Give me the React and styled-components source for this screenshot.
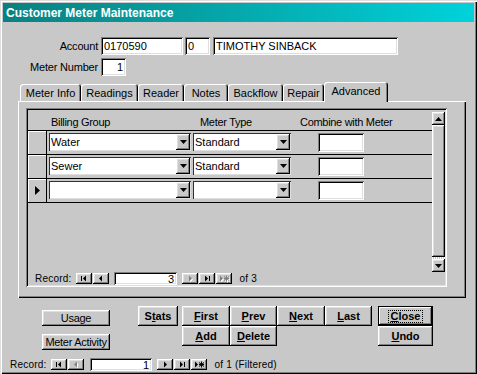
import React from 'react';
import styled, { createGlobalStyle, css } from 'styled-components';

const FACE = '#c8c8c8';
const FONT = `"Liberation Sans", Arial, sans-serif`;

const raised = css`
  box-shadow: inset -1px -1px #000, inset 1px 1px #fff, inset -2px -2px #808080, inset 2px 2px #dfdfdf;
`;

const sunken = css`
  box-shadow: inset 1px 1px #808080, inset -1px -1px #fff, inset 2px 2px #000, inset -2px -2px #dfdfdf;
`;

const GlobalStyle = createGlobalStyle`
  body {
    margin: 0;
    background: ${FACE};
    font-family: ${FONT};
    font-size: 11px;
    color: #000;
  }
`;

const Window = styled.div`
  width: 477px;
  height: 374px;
  box-sizing: border-box;
  padding: 3px;
  background: ${FACE};
  box-shadow: inset 1px 1px #dfdfdf, inset 2px 2px #fff, inset -1px -1px #000, inset -2px -2px #808080;
  display: flex;
  flex-direction: column;
`;

const TitleBar = styled.div`
  height: 19px;
  flex: none;
  background: linear-gradient(to right, #0a8080, #00d2da);
  color: #fff;
  font: 700 12px ${FONT};
  padding-left: 3px;
  display: flex;
  align-items: center;
`;

const Body = styled.div`
  flex: 1;
  display: flex;
  flex-direction: column;
`;

const FieldRow = styled.div`
  display: flex;
  align-items: center;
  margin-top: ${(p) => p.$mt}px;
`;

const Label = styled.div`
  width: 95px;
  margin-right: 3px;
  text-align: right;
  letter-spacing: -0.2px;
`;

const TextBox = styled.div`
  box-sizing: border-box;
  width: ${(p) => p.$w}px;
  height: 18px;
  margin-left: ${(p) => p.$ml || 0}px;
  padding: 0 3px;
  background: #fff;
  ${sunken};
  display: flex;
  align-items: center;
  justify-content: ${(p) => (p.$right ? 'flex-end' : 'flex-start')};
`;

const TabStrip = styled.div`
  display: flex;
  align-items: flex-end;
  height: 19px;
  margin: 6px 0 0 17px;
`;

const Tab = styled.div`
  box-sizing: border-box;
  width: ${(p) => p.$w}px;
  height: ${(p) => (p.$active ? 20 : 17)}px;
  margin-bottom: ${(p) => (p.$active ? -1 : 0)}px;
  position: relative;
  z-index: ${(p) => (p.$active ? 1 : 0)};
  background: ${FACE};
  border-radius: 3px 3px 0 0;
  box-shadow: inset 1px 1px #fff, inset -1px 0 #000, inset -2px 0 #808080;
  display: flex;
  align-items: center;
  justify-content: center;
  padding-bottom: ${(p) => (p.$active ? 3 : 0)}px;
`;

const Panel = styled.div`
  box-sizing: border-box;
  width: 448px;
  height: 197px;
  margin-left: 15px;
  padding: 7px 0 0 8px;
  box-shadow: inset 1px 1px #fff, inset -1px -1px #000, inset -2px -2px #808080;
`;

const Subform = styled.div`
  box-sizing: border-box;
  width: 421px;
  height: 179px;
  padding: 2px;
  ${sunken};
  display: flex;
  flex-direction: column;
`;

const SubMain = styled.div`
  height: 162px;
  display: flex;
`;

const Sheet = styled.div`
  flex: 1;
  display: flex;
  flex-direction: column;
`;

const SheetHead = styled.div`
  box-sizing: border-box;
  height: 21px;
  padding-top: 4px;
  border-bottom: 1px solid #000;
  display: flex;
  align-items: center;
  letter-spacing: -0.3px;
`;

const HeadCell = styled.div`
  box-sizing: border-box;
  width: ${(p) => p.$w}px;
  padding-left: ${(p) => p.$pl || 0}px;
  white-space: nowrap;
`;

const SheetRow = styled.div`
  box-sizing: border-box;
  height: 24px;
  border-bottom: 1px solid #000;
  display: flex;
  align-items: flex-start;
`;

const Selector = styled.div`
  box-sizing: border-box;
  width: 19px;
  align-self: stretch;
  border-right: 1px solid #000;
  box-shadow: inset 1px 1px #fff;
  display: flex;
  align-items: center;
  justify-content: center;
`;

const Combo = styled.div`
  box-sizing: border-box;
  width: ${(p) => p.$w}px;
  height: 18px;
  margin: 2px 0 0 ${(p) => p.$ml}px;
  background: #fff;
  box-shadow: inset 1px 1px #303030, inset -1px -1px #dfdfdf;
  display: flex;
  align-items: center;
  padding-left: 2px;
`;

const ComboText = styled.span`
  flex: 1;
`;

const DropBtn = styled.div`
  box-sizing: border-box;
  width: 14px;
  height: 16px;
  margin-right: 1px;
  background: ${FACE};
  ${raised};
  display: flex;
  align-items: center;
  justify-content: center;
`;

const SmallBox = styled.div`
  box-sizing: border-box;
  width: 46px;
  height: 19px;
  margin: 2px 0 0 27px;
  background: #fff;
  ${sunken};
`;

const VScroll = styled.div`
  width: 13px;
  margin-top: 2px;
  display: flex;
  flex-direction: column;
`;

const ScrollBtn = styled.div`
  box-sizing: border-box;
  height: 13px;
  background: ${FACE};
  ${raised};
  display: flex;
  align-items: center;
  justify-content: center;
`;

const Thumb = styled.div`
  flex: 1;
  background: ${FACE};
  ${raised};
`;

const Track = styled.div`
  height: 2px;
  background: repeating-linear-gradient(90deg, #fff 0 1px, ${FACE} 1px 2px);
`;

const NavBar = styled.div`
  height: 13px;
  flex: none;
  display: flex;
  align-items: center;
  padding-left: ${(p) => p.$pl}px;
  font-size: 10px;
  letter-spacing: 0.2px;
  margin-top: ${(p) => p.$mt || 0}px;
`;

const NavText = styled.span`
  margin-right: ${(p) => p.$mr || 0}px;
  margin-left: ${(p) => p.$ml || 0}px;
  white-space: nowrap;
`;

const NavBtn = styled.div`
  box-sizing: border-box;
  width: 16px;
  height: 11px;
  margin-left: ${(p) => p.$ml ?? 1}px;
  background: ${FACE};
  ${raised};
  display: flex;
`;

const NavBox = styled.div`
  box-sizing: border-box;
  width: ${(p) => p.$w}px;
  height: 13px;
  margin-left: ${(p) => p.$ml}px;
  padding-right: 3px;
  background: #fff;
  ${sunken};
  display: flex;
  align-items: center;
  justify-content: flex-end;
  font-size: 11px;
`;

const Bottom = styled.div`
  display: flex;
  height: 44px;
  margin-top: 8px;
  align-items: flex-start;
`;

const SideCol = styled.div`
  display: flex;
  flex-direction: column;
  gap: 8px;
  margin: 4px 0 0 39px;
`;

const BtnGrid = styled.div`
  display: grid;
  grid-template-columns: ${(p) => p.$cols};
  grid-auto-rows: 20px;
  margin-left: ${(p) => p.$ml}px;
`;

const Btn = styled.button`
  box-sizing: border-box;
  width: ${(p) => (p.$w ? `${p.$w}px` : 'auto')};
  height: ${(p) => p.$h || 20}px;
  margin: 0 0 0 ${(p) => p.$ml || 0}px;
  padding: 0;
  border: none;
  background: ${FACE};
  ${raised};
  font: ${(p) => (p.$regular ? 400 : 700)} 11px ${FONT};
  letter-spacing: ${(p) => (p.$regular ? '-0.3px' : '0')};
  color: #000;
  display: flex;
  align-items: center;
  justify-content: center;
  ${(p) =>
    p.$default &&
    css`
      box-shadow: inset 0 0 0 1px #000, inset -2px -2px #000, inset 2px 2px #fff, inset -3px -3px #808080;
    `}
`;

const FocusText = styled.span`
  outline: 1px dotted #000;
  padding: 0 2px;
  line-height: 11px;
`;

function NavIcon({ kind, disabled }) {
  const shapes = {
    first: (
      <>
        <rect x="5" y="3" width="1" height="5" />
        <polygon points="7,5.5 10,2.5 10,8.5" />
      </>
    ),
    prev: <polygon points="6,5.5 9,2.5 9,8.5" />,
    next: <polygon points="7,2.5 7,8.5 10,5.5" />,
    last: (
      <>
        <polygon points="6,2.5 6,8.5 9,5.5" />
        <rect x="10" y="3" width="1" height="5" />
      </>
    ),
    add: (
      <>
        <polygon points="4,2.5 4,8.5 7,5.5" />
        <path d="M10.5 2.5v6M8 3.5l5 4M8 7.5l5-4M8 5.5h5" stroke="currentColor" strokeWidth="1" fill="none" />
      </>
    ),
  };
  return (
    <svg width="16" height="11" viewBox="0 0 16 11">
      {disabled && (
        <g fill="#fff" color="#fff" transform="translate(1 1)">
          {shapes[kind]}
        </g>
      )}
      <g fill={disabled ? '#808080' : '#000'} color={disabled ? '#808080' : '#000'}>
        {shapes[kind]}
      </g>
    </svg>
  );
}

function Arrow({ up }) {
  return (
    <svg width="7" height="4" viewBox="0 0 7 4">
      <polygon points={up ? '3.5,0 7,4 0,4' : '0,0 7,0 3.5,4'} fill="#000" />
    </svg>
  );
}

function RowPointer() {
  return (
    <svg width="5" height="9" viewBox="0 0 5 9">
      <polygon points="0,0 0,9 5,4.5" fill="#000" />
    </svg>
  );
}

function Nav({ pl, mt, current, total, boxW, boxMl, disabled = [] }) {
  const off = (k) => disabled.includes(k);
  return (
    <NavBar $pl={pl} $mt={mt}>
      <NavText $mr={5}>Record:</NavText>
      <NavBtn $ml={0}><NavIcon kind="first" disabled={off('first')} /></NavBtn>
      <NavBtn><NavIcon kind="prev" disabled={off('prev')} /></NavBtn>
      <NavBox $w={boxW} $ml={boxMl}>{current}</NavBox>
      <NavBtn $ml={5}><NavIcon kind="next" disabled={off('next')} /></NavBtn>
      <NavBtn><NavIcon kind="last" disabled={off('last')} /></NavBtn>
      <NavBtn><NavIcon kind="add" disabled={off('add')} /></NavBtn>
      <NavText $ml={7}>{total}</NavText>
    </NavBar>
  );
}

const tabs = [
  ['Meter Info', 61],
  ['Readings', 57],
  ['Reader', 46],
  ['Notes', 44],
  ['Backflow', 55],
  ['Repair', 41],
  ['Advanced', 64],
];

const rows = [
  { group: 'Water', type: 'Standard' },
  { group: 'Sewer', type: 'Standard' },
  { group: '', type: '', current: true },
];

export default function App() {
  return (
    <>
      <GlobalStyle />
      <Window>
        <TitleBar>Customer Meter Maintenance</TitleBar>
        <Body>
          <FieldRow $mt={15}>
            <Label>Account</Label>
            <TextBox $w={82}>0170590</TextBox>
            <TextBox $w={25} $ml={2}>0</TextBox>
            <TextBox $w={185} $ml={3}>TIMOTHY SINBACK</TextBox>
          </FieldRow>
          <FieldRow $mt={3}>
            <Label>Meter Number</Label>
            <TextBox $w={25} $right>1</TextBox>
          </FieldRow>

          <TabStrip>
            {tabs.map(([name, w]) => (
              <Tab key={name} $w={w} $active={name === 'Advanced'}>
                {name}
              </Tab>
            ))}
          </TabStrip>

          <Panel>
            <Subform>
              <SubMain>
                <Sheet>
                  <SheetHead>
                    <HeadCell $w={172} $pl={23}>Billing Group</HeadCell>
                    <HeadCell $w={100}>Meter Type</HeadCell>
                    <HeadCell>Combine with Meter</HeadCell>
                  </SheetHead>
                  {rows.map((r, i) => (
                    <SheetRow key={i}>
                      <Selector>{r.current && <RowPointer />}</Selector>
                      <Combo $w={142} $ml={2}>
                        <ComboText>{r.group}</ComboText>
                        <DropBtn><Arrow /></DropBtn>
                      </Combo>
                      <Combo $w={98} $ml={2}>
                        <ComboText>{r.type}</ComboText>
                        <DropBtn><Arrow /></DropBtn>
                      </Combo>
                      <SmallBox />
                    </SheetRow>
                  ))}
                </Sheet>
                <VScroll>
                  <ScrollBtn><Arrow up /></ScrollBtn>
                  <Thumb />
                  <Track />
                  <ScrollBtn><Arrow /></ScrollBtn>
                </VScroll>
              </SubMain>
              <Nav pl={7} current="3" total="of 3" boxW={63} boxMl={5} disabled={['next', 'add']} />
            </Subform>
          </Panel>

          <Bottom>
            <SideCol>
              <Btn $w={68} $h={16} $regular>Usage</Btn>
              <Btn $w={68} $h={16} $regular>Meter Activity</Btn>
            </SideCol>
            <Btn $w={40} $ml={28}>S<u>t</u>ats</Btn>
            <BtnGrid $cols="48px 47px 48px 47px" $ml={4}>
              <Btn><u>F</u>irst</Btn>
              <Btn><u>P</u>rev</Btn>
              <Btn><u>N</u>ext</Btn>
              <Btn><u>L</u>ast</Btn>
              <Btn><u>A</u>dd</Btn>
              <Btn><u>D</u>elete</Btn>
            </BtnGrid>
            <BtnGrid $cols="55px" $ml={6}>
              <Btn $default><FocusText><u>C</u>lose</FocusText></Btn>
              <Btn><u>U</u>ndo</Btn>
            </BtnGrid>
          </Bottom>

          <Nav pl={7} mt={8} current="1" total="of 1 (Filtered)" boxW={62} boxMl={6} disabled={['prev']} />
        </Body>
      </Window>
    </>
  );
}
